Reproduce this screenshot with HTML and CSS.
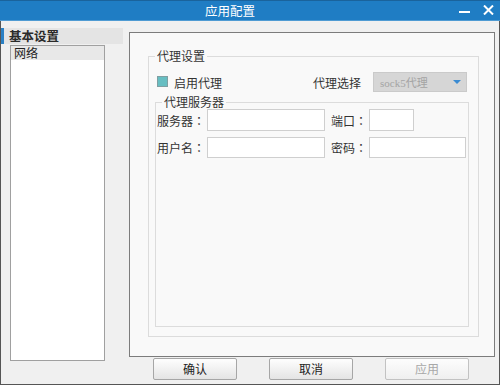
FILE: index.html
```html
<!DOCTYPE html>
<html>
<head>
<meta charset="utf-8">
<link rel="stylesheet" href="styles.css">
</head>
<body>
<div class="window">
  <div class="titlebar">
    <div class="title">应用配置</div>
    <div class="controls">
      <span class="min"></span>
      <svg class="close" width="11" height="10" viewBox="0 0 11 10"><path d="M1 0.5 L10 9.5 M10 0.5 L1 9.5" stroke="#fff" stroke-width="2" fill="none"/></svg>
    </div>
  </div>
  <div class="body">
    <div class="sidebar">
      <div class="side-head">基本设置</div>
      <div class="side-list">
        <div class="side-item">网络</div>
      </div>
    </div>
    <div class="main">
      <div class="panel">
        <fieldset class="group outer">
          <legend>代理设置</legend>
          <div class="row-top">
            <div class="check-wrap"><span class="checkbox"></span><span>启用代理</span></div>
            <span class="sel-label">代理选择</span>
            <div class="select"><span class="sel-text">sock5代理</span><span class="arrow"></span></div>
          </div>
          <fieldset class="group inner">
            <legend>代理服务器</legend>
            <div class="form-row">
              <span class="lbl">服务器<span class="colon">：</span></span><span class="input w-server"></span>
              <span class="lbl2">端口<span class="colon">：</span></span><span class="input w-port"></span>
            </div>
            <div class="form-row r2">
              <span class="lbl">用户名<span class="colon">：</span></span><span class="input w-server"></span>
              <span class="lbl2">密码<span class="colon">：</span></span><span class="input w-pass"></span>
            </div>
          </fieldset>
        </fieldset>
      </div>
      <div class="buttons">
        <div class="btn">确认</div>
        <div class="btn">取消</div>
        <div class="btn disabled">应用</div>
      </div>
    </div>
  </div>
</div>
</body>
</html>
```
FILE: styles.css
```css
* { box-sizing: border-box; }
html, body { margin: 0; padding: 0; }
body {
  width: 500px; height: 385px; overflow: hidden;
  font-family: "Noto Sans CJK SC", "Noto Sans", sans-serif;
  font-size: 12px; color: #333;
}
.window {
  width: 500px; height: 385px;
  background: #f0f0f0;
  border: 1px solid #555;
  border-top: none;
  display: flex; flex-direction: column;
}
.titlebar {
  height: 21px; flex: none;
  background: #1f7dc4;
  border-top: 1px solid #1a639c;
  border-bottom: 1px solid #4f9bd3;
  display: flex; align-items: center;
  color: #fff;
  margin: 0 -1px;
}
.title { padding-left: 205px; font-size: 12.5px; line-height: 18px; flex: 1; }
.controls { display: flex; align-items: center; padding-right: 6px; }
.min { width: 11px; height: 2px; background: #fff; margin-top: 3px; margin-right: 13px; }
.close { display: block; margin-top: -1px; }
.body { flex: 1; display: flex; }
.sidebar { width: 122px; margin-right: 6px; padding-top: 7px; display: flex; flex-direction: column; }
.side-head {
  height: 16px; line-height: 16px;
  background: #e4e4e4;
  border-left: 3px solid #2a80c4;
  padding-left: 5px;
  font-weight: bold; font-size: 12.5px; color: #2a2a2a;
}
.side-list {
  margin: 1px 0 0 9px; width: 95px; height: 316px;
  background: #fff; border: 1px solid #a0a0a0;
}
.side-item { height: 14px; line-height: 14px; background: #e8e8e8; padding-left: 3px; color: #222; }
.main { display: flex; flex-direction: column; padding-top: 11px; }
.panel {
  width: 366px; height: 325px;
  background: #f9f9f9;
  border: 1px solid #7c7c7c;
  padding: 16px 0 0 18px;
}
.group { margin: 0; border: 1px solid #dcdcdc; }
.group legend { padding: 0 2px; line-height: 14px; color: #333; }
.outer { width: 331px; height: 288px; padding: 0 6px 8px 6px; }
.row-top { display: flex; align-items: center; height: 20px; margin-top: 9px; }
.check-wrap { width: 156px; display: flex; align-items: center; }
.checkbox {
  width: 11px; height: 11px; margin: -2px 6px 0 2px;
  background: #67bec2; border: 1px solid #7f9fa2;
}
.sel-label { margin-left: 2px; width: 60px; }
.select {
  width: 94px; height: 20px;
  background: #d6d6d6; border: 1px solid #cacaca;
  display: flex; align-items: center; justify-content: space-between;
  padding: 0 5px 0 6px;
}
.sel-text { font-family: "Liberation Serif", "Noto Sans CJK SC", serif; font-size: 11px; color: #a4a4a4; }
.arrow { width: 0; height: 0; border-left: 4px solid transparent; border-right: 4px solid transparent; border-top: 4px solid #3b8bd2; }
.inner { width: 314px; height: 232px; margin-top: 3px; padding: 0 0 0 1px; }
.inner legend { margin-left: 5px; }
.form-row { display: flex; align-items: center; height: 22px; }
.form-row.r2 { margin-top: 6px; height: 21px; }
.lbl { width: 50px; }
.lbl2 { width: 38px; margin-left: 6px; }
.colon { font-family: "Noto Sans CJK TC", "Noto Sans CJK SC", sans-serif; }
.input { display: block; height: 100%; background: #fff; border: 1px solid #cfcfcf; }
.w-server { width: 118px; }
.w-port { width: 45px; }
.w-pass { width: 97px; }
.buttons { display: flex; gap: 32px; margin-top: 1px; padding-left: 24px; }
.btn {
  width: 84px; height: 22px; line-height: 20px; text-align: center;
  background: linear-gradient(#fefefe, #e4e4e4);
  border: 1px solid #a6a6a6; border-radius: 2px; color: #222;
}
.btn.disabled { color: #a8a8a8; border-color: #c2c2c2; background: linear-gradient(#fdfdfd, #efefef); }
```
